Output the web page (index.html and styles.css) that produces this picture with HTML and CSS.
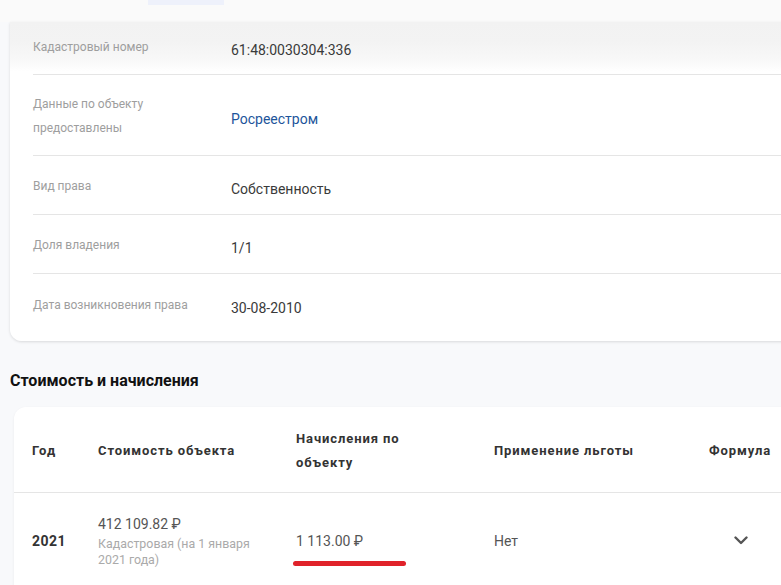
FILE: index.html
```html
<!DOCTYPE html>
<html lang="ru">
<head>
<meta charset="utf-8">
<link rel="stylesheet" href="styles.css">
</head>
<body>
<div class="topbar"><div class="tab-mark"></div></div>
<main class="page">
  <section class="info-card">
    <div class="row first">
      <div class="label">Кадастровый номер</div>
      <div class="value">61:48:0030304:336</div>
    </div>
    <div class="row two">
      <div class="label">Данные по объекту<br>предоставлены</div>
      <div class="value link">Росреестром</div>
    </div>
    <div class="row">
      <div class="label">Вид права</div>
      <div class="value">Собственность</div>
    </div>
    <div class="row">
      <div class="label">Доля владения</div>
      <div class="value">1/1</div>
    </div>
    <div class="row last">
      <div class="label">Дата возникновения права</div>
      <div class="value">30-08-2010</div>
    </div>
  </section>

  <h2 class="section-title">Стоимость и начисления</h2>

  <section class="table-card">
    <div class="trow thead">
      <div class="cell">Год</div>
      <div class="cell">Стоимость объекта</div>
      <div class="cell">Начисления по<br>объекту</div>
      <div class="cell">Применение льготы</div>
      <div class="cell">Формула</div>
    </div>
    <div class="trow tbody">
      <div class="cell year">2021</div>
      <div class="cell cost">
        <div class="cost-main">412 109.82 ₽</div>
        <div class="cost-sub">Кадастровая (на 1 января<br>2021 года)</div>
      </div>
      <div class="cell"><span class="amount">1 113.00 ₽</span></div>
      <div class="cell plain">Нет</div>
      <div class="cell chevron">
        <svg width="14" height="9" viewBox="0 0 14 9"><path d="M1.5 1.5 L7 7 L12.5 1.5" fill="none" stroke="#555" stroke-width="2.4" stroke-linecap="round" stroke-linejoin="round"/></svg>
      </div>
    </div>
  </section>
</main>
</body>
</html>
```

FILE: styles.css
```css
html, body {
  margin: 0;
  padding: 0;
}
body {
  background: #f8f9fb;
  font-family: Roboto, "Liberation Sans", Arial, sans-serif;
  color: #333;
  overflow: hidden;
  width: 781px;
  height: 585px;
}
.topbar {
  height: 22px;
  background: #fafafa;
  display: flex;
  padding-left: 148px;
}
.tab-mark {
  width: 76px;
  height: 5px;
  background: #eef1fb;
}
.page {
  padding-left: 10px;
}
.info-card {
  margin-right: -40px;
  padding-left: 23px;
  background: linear-gradient(#f2f2f2 0, #f3f3f3 20px, #f8f8f8 38px, #fff 50px);
  border-radius: 0 0 12px 12px;
  box-shadow: 0 1px 3px rgba(0, 0, 0, 0.13);
}
.row {
  display: flex;
  align-items: center;
  padding: 18px 0 16px;
  border-bottom: 1px solid #e5e5e5;
}
.row.first {
  padding-top: 13px;
  padding-bottom: 15px;
}
.row.two {
  padding: 17px 0 15px;
}
.row.last {
  border-bottom: none;
  padding-top: 19px;
  padding-bottom: 24px;
}
.label {
  width: 198px;
  flex: none;
  font-size: 12px;
  line-height: 24px;
  color: #9e9e9e;
}
.value {
  font-size: 14px;
  line-height: 18px;
  padding-top: 6px;
  color: #3a3a3a;
}
.value.link {
  color: #1d559b;
}
.section-title {
  margin: 0;
  padding: 30px 0 16px;
  font-size: 16px;
  line-height: 20px;
  font-weight: 700;
  color: #111;
}
.table-card {
  margin-left: 4px;
  margin-right: -40px;
  padding-bottom: 30px;
  background: #fff;
  border-radius: 12px;
  box-shadow: 0 1px 3px rgba(0, 0, 0, 0.06);
}
.trow {
  display: grid;
  grid-template-columns: 66px 198px 198px 215px 1fr;
  align-items: center;
  padding-left: 18px;
}
.thead {
  height: 83px;
  padding-top: 2px;
  border-bottom: 1px solid #e5e5e5;
}
.thead .cell {
  font-size: 13px;
  line-height: 24px;
  font-weight: 700;
  letter-spacing: 0.9px;
  color: #333;
}
.tbody {
  height: 95px;
}
.tbody .cell {
  font-size: 14px;
  line-height: 20px;
  color: #555;
}
.tbody .cell.year {
  font-weight: 700;
  letter-spacing: 0.5px;
  color: #333;
}
.cost-main {
  line-height: 20px;
  color: #555;
}
.cost-sub {
  margin-top: 2px;
  font-size: 12.4px;
  line-height: 16px;
  color: #aaa;
}
.amount {
  position: relative;
  display: inline-block;
}
.amount::after {
  content: "";
  position: absolute;
  left: -3px;
  top: 30px;
  width: 113px;
  height: 5px;
  border-radius: 3px;
  background: #e0222a;
}
.chevron {
  padding-left: 25px;
  display: flex;
  align-items: center;
}
```
